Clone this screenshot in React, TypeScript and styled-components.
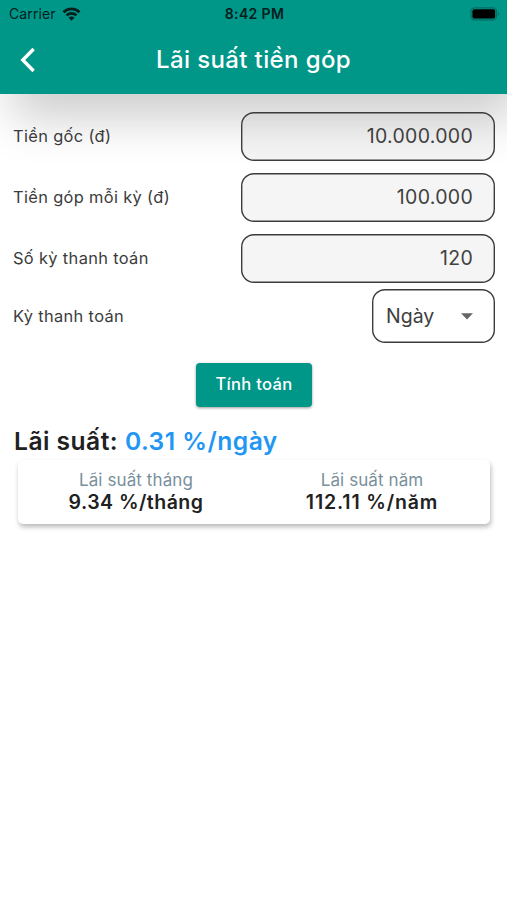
import React from "react";
import styled, { createGlobalStyle } from "styled-components";

const GlobalStyle = createGlobalStyle`
  *, *::before, *::after { box-sizing: border-box; }
  html, body { margin: 0; background: #fff; }
  body { font-family: Inter, "Noto Sans", sans-serif; color: #3b3b3b; overflow: hidden; }
`;

const Screen = styled.main`
  width: 507px;
  height: 900px;
  background: #fff;
  overflow: hidden;
`;

const Header = styled.header`
  height: 94px;
  background: #009688;
  box-shadow: 12px 24px 48px rgba(0, 0, 0, 0.2);
`;

const StatusBar = styled.div`
  display: grid;
  grid-template-columns: 1fr auto 1fr;
  align-items: center;
  height: 27px;
  padding: 0 7px 0 9px;
  color: #04201d;
`;

const Carrier = styled.div`
  display: flex;
  align-items: center;
  gap: 6px;
  font-size: 14px;
  letter-spacing: 0.1px;
`;

const Clock = styled.div`
  font-size: 14px;
  font-weight: 600;
  letter-spacing: 0.35px;
`;

const BatteryIcon = styled.svg`
  justify-self: end;
`;

const AppBar = styled.div`
  display: grid;
  grid-template-columns: 56px 1fr 56px;
  align-items: center;
  height: 65px;
  color: #fff;
`;

const BackButton = styled.button`
  display: flex;
  justify-content: center;
  padding: 0;
  border: 0;
  background: none;
  color: inherit;
`;

const Title = styled.h1`
  margin: 0;
  text-align: center;
  font-size: 24px;
  font-weight: 500;
  letter-spacing: 0.38px;
`;

const Form = styled.form`
  display: flex;
  flex-direction: column;
  padding: 18px 12px 0 13px;
`;

const Field = styled.label<{ $height: number; $gap: number }>`
  display: flex;
  align-items: center;
  justify-content: space-between;
  height: ${(p) => p.$height}px;
  margin-bottom: ${(p) => p.$gap}px;
`;

const FieldName = styled.span`
  padding-bottom: 1px;
  font-size: 16.4px;
  letter-spacing: 0.35px;
`;

const NumberInput = styled.input`
  width: 254px;
  height: 49px;
  padding: 0 22px 2px;
  border: 0;
  border-radius: 13px;
  background: rgba(0, 0, 0, 0.04);
  box-shadow: inset 0 0 0 1.4px #3c3c3c;
  color: #404040;
  font: 400 19.5px Inter, sans-serif;
  letter-spacing: 0.3px;
  text-align: right;
  outline: 0;
`;

const Picker = styled.button`
  display: flex;
  align-items: center;
  justify-content: space-between;
  width: 123px;
  height: 54px;
  padding: 0 22px 0 14px;
  border: 0;
  border-radius: 13px;
  background: #fff;
  box-shadow: inset 0 0 0 1.4px #3c3c3c;
  color: #404040;
  font: 400 19.5px Inter, sans-serif;
  letter-spacing: 0;
`;

const Submit = styled.button`
  align-self: center;
  width: 116px;
  height: 44px;
  padding: 0 0 2px;
  border: 0;
  border-radius: 4px;
  background: #009688;
  box-shadow: 0 1px 3px rgba(0, 0, 0, 0.4);
  color: #fff;
  font: 500 16.6px Inter, sans-serif;
  letter-spacing: 0.3px;
`;

const Result = styled.section`
  padding: 17px 17px 0 14px;
`;

const Headline = styled.h2`
  margin: 0;
  color: #212121;
  font-size: 24.6px;
  line-height: 34px;
  font-weight: 600;
  letter-spacing: 0.48px;
`;

const Rate = styled.span`
  color: #2196f3;
`;

const Card = styled.div`
  display: grid;
  grid-template-columns: 1fr 1fr;
  height: 64px;
  margin: 2px 0 0 4px;
  padding-top: 9px;
  border-radius: 5px;
  background: #fff;
  box-shadow: 1px 3px 5px rgba(0, 0, 0, 0.28);
`;

const Stat = styled.div`
  display: flex;
  flex-direction: column;
  align-items: center;
`;

const StatName = styled.span`
  color: #78909c;
  font-size: 17px;
  line-height: 23px;
  letter-spacing: 0.1px;
`;

const StatValue = styled.strong<{ $tracking: number }>`
  color: #212121;
  font-size: 19.5px;
  line-height: 21px;
  font-weight: 600;
  letter-spacing: ${(p) => p.$tracking}px;
`;

const fields = [
  { name: "Tiền gốc (đ)", value: "10.000.000", gap: 12 },
  { name: "Tiền góp mỗi kỳ (đ)", value: "100.000", gap: 12 },
  { name: "Số kỳ thanh toán", value: "120", gap: 6 },
];

const stats = [
  { name: "Lãi suất tháng", value: "9.34 %/tháng", tracking: 0.48 },
  { name: "Lãi suất năm", value: "112.11 %/năm", tracking: 0.85 },
];

export default function App() {
  return (
    <Screen>
      <GlobalStyle />
      <Header>
        <StatusBar>
          <Carrier>
            Carrier
            <svg width="19" height="14" viewBox="0 0 18 14" fill="none" stroke="currentColor" strokeWidth="2.6">
              <path d="M1 5.2C5.5.8 12.5.8 17 5.2" />
              <path d="M3.9 8.4c2.9-2.7 7.3-2.7 10.2 0" />
              <path d="M9 13.8 5.9 10.6c1.7-1.6 4.5-1.6 6.2 0z" fill="currentColor" stroke="none" />
            </svg>
          </Carrier>
          <Clock>8:42 PM</Clock>
          <BatteryIcon width="30" height="14" viewBox="0 0 30 14">
            <rect x="1" y="0.8" width="25.5" height="12" rx="3.6" fill="none" stroke="#006d63" strokeWidth="1.2" />
            <rect x="2.4" y="2.2" width="22.8" height="9.2" rx="2" fill="#000" />
            <path d="M28 5v3.8c1.4-.6 1.4-3.2 0-3.8z" fill="#006d63" />
          </BatteryIcon>
        </StatusBar>
        <AppBar>
          <BackButton type="button" aria-label="Back">
            <svg width="16" height="26" viewBox="0 0 16 26" fill="none" stroke="currentColor" strokeWidth="3.4">
              <path d="M13.6 2 2.8 13l10.8 11" />
            </svg>
          </BackButton>
          <Title>Lãi suất tiền góp</Title>
        </AppBar>
      </Header>
      <Form>
        {fields.map((f) => (
          <Field key={f.name} $height={49} $gap={f.gap}>
            <FieldName>{f.name}</FieldName>
            <NumberInput defaultValue={f.value} />
          </Field>
        ))}
        <Field as="div" $height={54} $gap={20}>
          <FieldName>Kỳ thanh toán</FieldName>
          <Picker type="button">
            Ngày
            <svg width="12" height="7" viewBox="0 0 12 7">
              <path d="M0 .3h12L6 6.5z" fill="#666" />
            </svg>
          </Picker>
        </Field>
        <Submit type="button">Tính toán</Submit>
      </Form>
      <Result>
        <Headline>
          Lãi suất: <Rate>0.31 %/ngày</Rate>
        </Headline>
        <Card>
          {stats.map((s) => (
            <Stat key={s.name}>
              <StatName>{s.name}</StatName>
              <StatValue $tracking={s.tracking}>{s.value}</StatValue>
            </Stat>
          ))}
        </Card>
      </Result>
    </Screen>
  );
}
